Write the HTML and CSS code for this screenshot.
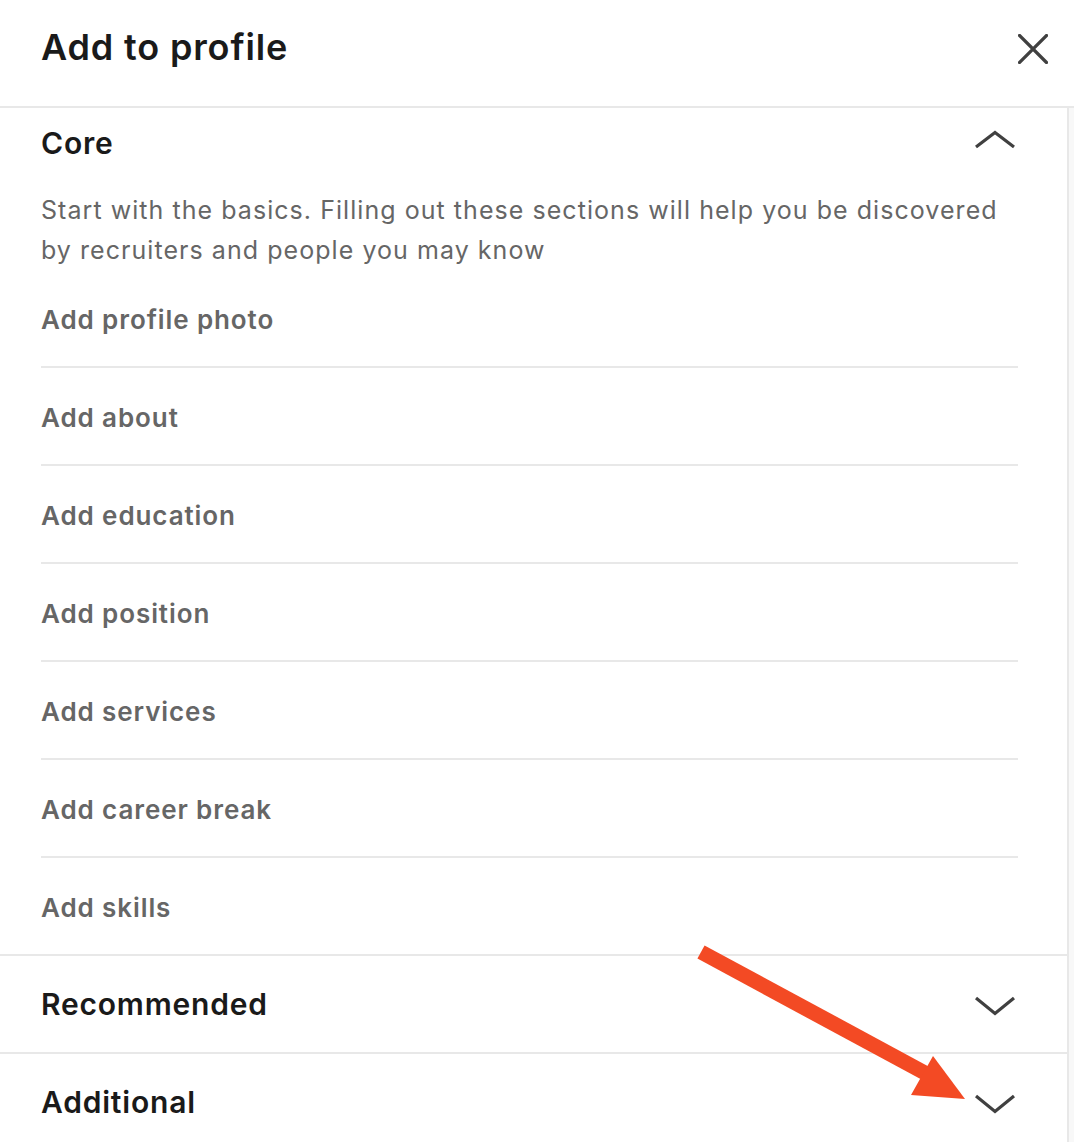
FILE: index.html
```html
<!DOCTYPE html>
<html lang="en">
<head>
<meta charset="utf-8">
<title>Add to profile</title>
<link rel="stylesheet" href="styles.css">
</head>
<body>
<div class="modal">
  <header class="modal-header">
    <h1 class="modal-title">Add to profile</h1>
    <button class="close-btn" aria-label="Dismiss">
      <svg class="close-icon" width="30" height="30" viewBox="0 0 30 30" aria-hidden="true">
        <path d="M1.5 1.5 L28.5 28.5 M28.5 1.5 L1.5 28.5" fill="none" stroke="#404040" stroke-width="3.2" stroke-linecap="square"/>
      </svg>
    </button>
  </header>
  <div class="modal-body">
    <div class="scroll-content">
      <section class="section">
        <div class="section-head section-head--core">
          <h2 class="section-title">Core</h2>
          <span class="chevron-box">
            <svg class="chevron" width="40" height="40" viewBox="0 0 40 40" aria-hidden="true">
              <polyline points="1,24 20,9.5 39,24" fill="none" stroke="#404040" stroke-width="3.2"/>
            </svg>
          </span>
        </div>
        <p class="section-desc">Start with the basics. Filling out these sections will help you be discovered by recruiters and people you may know</p>
        <ul class="item-list">
          <li class="item">Add profile photo</li>
          <li class="item">Add about</li>
          <li class="item">Add education</li>
          <li class="item">Add position</li>
          <li class="item">Add services</li>
          <li class="item">Add career break</li>
          <li class="item">Add skills</li>
        </ul>
      </section>
      <section class="section">
        <div class="section-head">
          <h2 class="section-title">Recommended</h2>
          <span class="chevron-box">
            <svg class="chevron" width="40" height="40" viewBox="0 0 40 40" aria-hidden="true">
              <polyline points="1,14 20,29.5 39,14" fill="none" stroke="#404040" stroke-width="3.2"/>
            </svg>
          </span>
        </div>
      </section>
      <section class="section section--last">
        <div class="section-head">
          <h2 class="section-title">Additional</h2>
          <span class="chevron-box">
            <svg class="chevron" width="40" height="40" viewBox="0 0 40 40" aria-hidden="true">
              <polyline points="1,14 20,29.5 39,14" fill="none" stroke="#404040" stroke-width="3.2"/>
            </svg>
          </span>
        </div>
      </section>
    </div>
    <div class="scrollbar"></div>
  </div>
  <svg class="annotation" width="1074" height="1142" viewBox="0 0 1074 1142" aria-hidden="true">
    <line x1="701" y1="952" x2="925" y2="1073" stroke="#f34a24" stroke-width="15"/>
    <polygon points="933,1056 911,1095 965,1099" fill="#f34a24"/>
  </svg>
</div>
</body>
</html>
```
FILE: styles.css
```css
html, body {
  margin: 0;
  padding: 0;
  background: #ffffff;
}

body {
  font-family: Inter, "Noto Sans", "Liberation Sans", sans-serif;
  overflow: hidden;
}

.modal {
  position: relative;
  width: 1074px;
  height: 1142px;
  overflow: hidden;
}

.modal-header {
  display: flex;
  align-items: flex-start;
  justify-content: space-between;
  height: 106px;
  box-sizing: content-box;
  padding: 0 26px 0 41px;
  border-bottom: 2px solid #e8e8e8;
}

.modal-title {
  margin: 23px 0 0;
  font-size: 36px;
  line-height: 48px;
  font-weight: 600;
  color: #1a1a1a;
  letter-spacing: 0.85px;
}

.close-btn {
  margin-top: 34px;
  padding: 0;
  border: 0;
  background: none;
  width: 30px;
  height: 30px;
  display: block;
}

.close-icon {
  display: block;
}

.modal-body {
  display: flex;
}

.scroll-content {
  flex: 1;
  min-width: 0;
}

.scrollbar {
  width: 5px;
  border-left: 2px solid #e8e8e8;
  background: #f8f8f8;
}

.section {
  border-bottom: 2px solid #e8e8e8;
}

.section--last {
  border-bottom: 0;
}

.section-head {
  display: flex;
  align-items: center;
  justify-content: space-between;
  padding: 28px 48px 28px 41px;
}

.section-head--core {
  padding-top: 15px;
  padding-bottom: 27px;
}

.section-title {
  margin: 0;
  font-size: 30px;
  line-height: 40px;
  font-weight: 600;
  color: #1a1a1a;
  letter-spacing: 0.8px;
}

.chevron-box {
  width: 48px;
  height: 40px;
  display: flex;
  align-items: center;
  justify-content: center;
}

.chevron {
  display: block;
}

.section-desc {
  margin: 0;
  padding: 0 49px 0 41px;
  font-size: 25px;
  line-height: 40px;
  font-weight: 400;
  color: #666666;
  letter-spacing: 1.05px;
}

.item-list {
  list-style: none;
  margin: 0 49px 0 41px;
  padding: 0;
}

.item {
  padding: 30px 0 26px;
  font-size: 26px;
  line-height: 40px;
  font-weight: 600;
  color: #666666;
  letter-spacing: 0.9px;
  border-bottom: 2px solid #e8e8e8;
}

.item:last-child {
  border-bottom: 0;
}

.annotation {
  position: absolute;
  top: 0;
  left: 0;
  pointer-events: none;
}
```
